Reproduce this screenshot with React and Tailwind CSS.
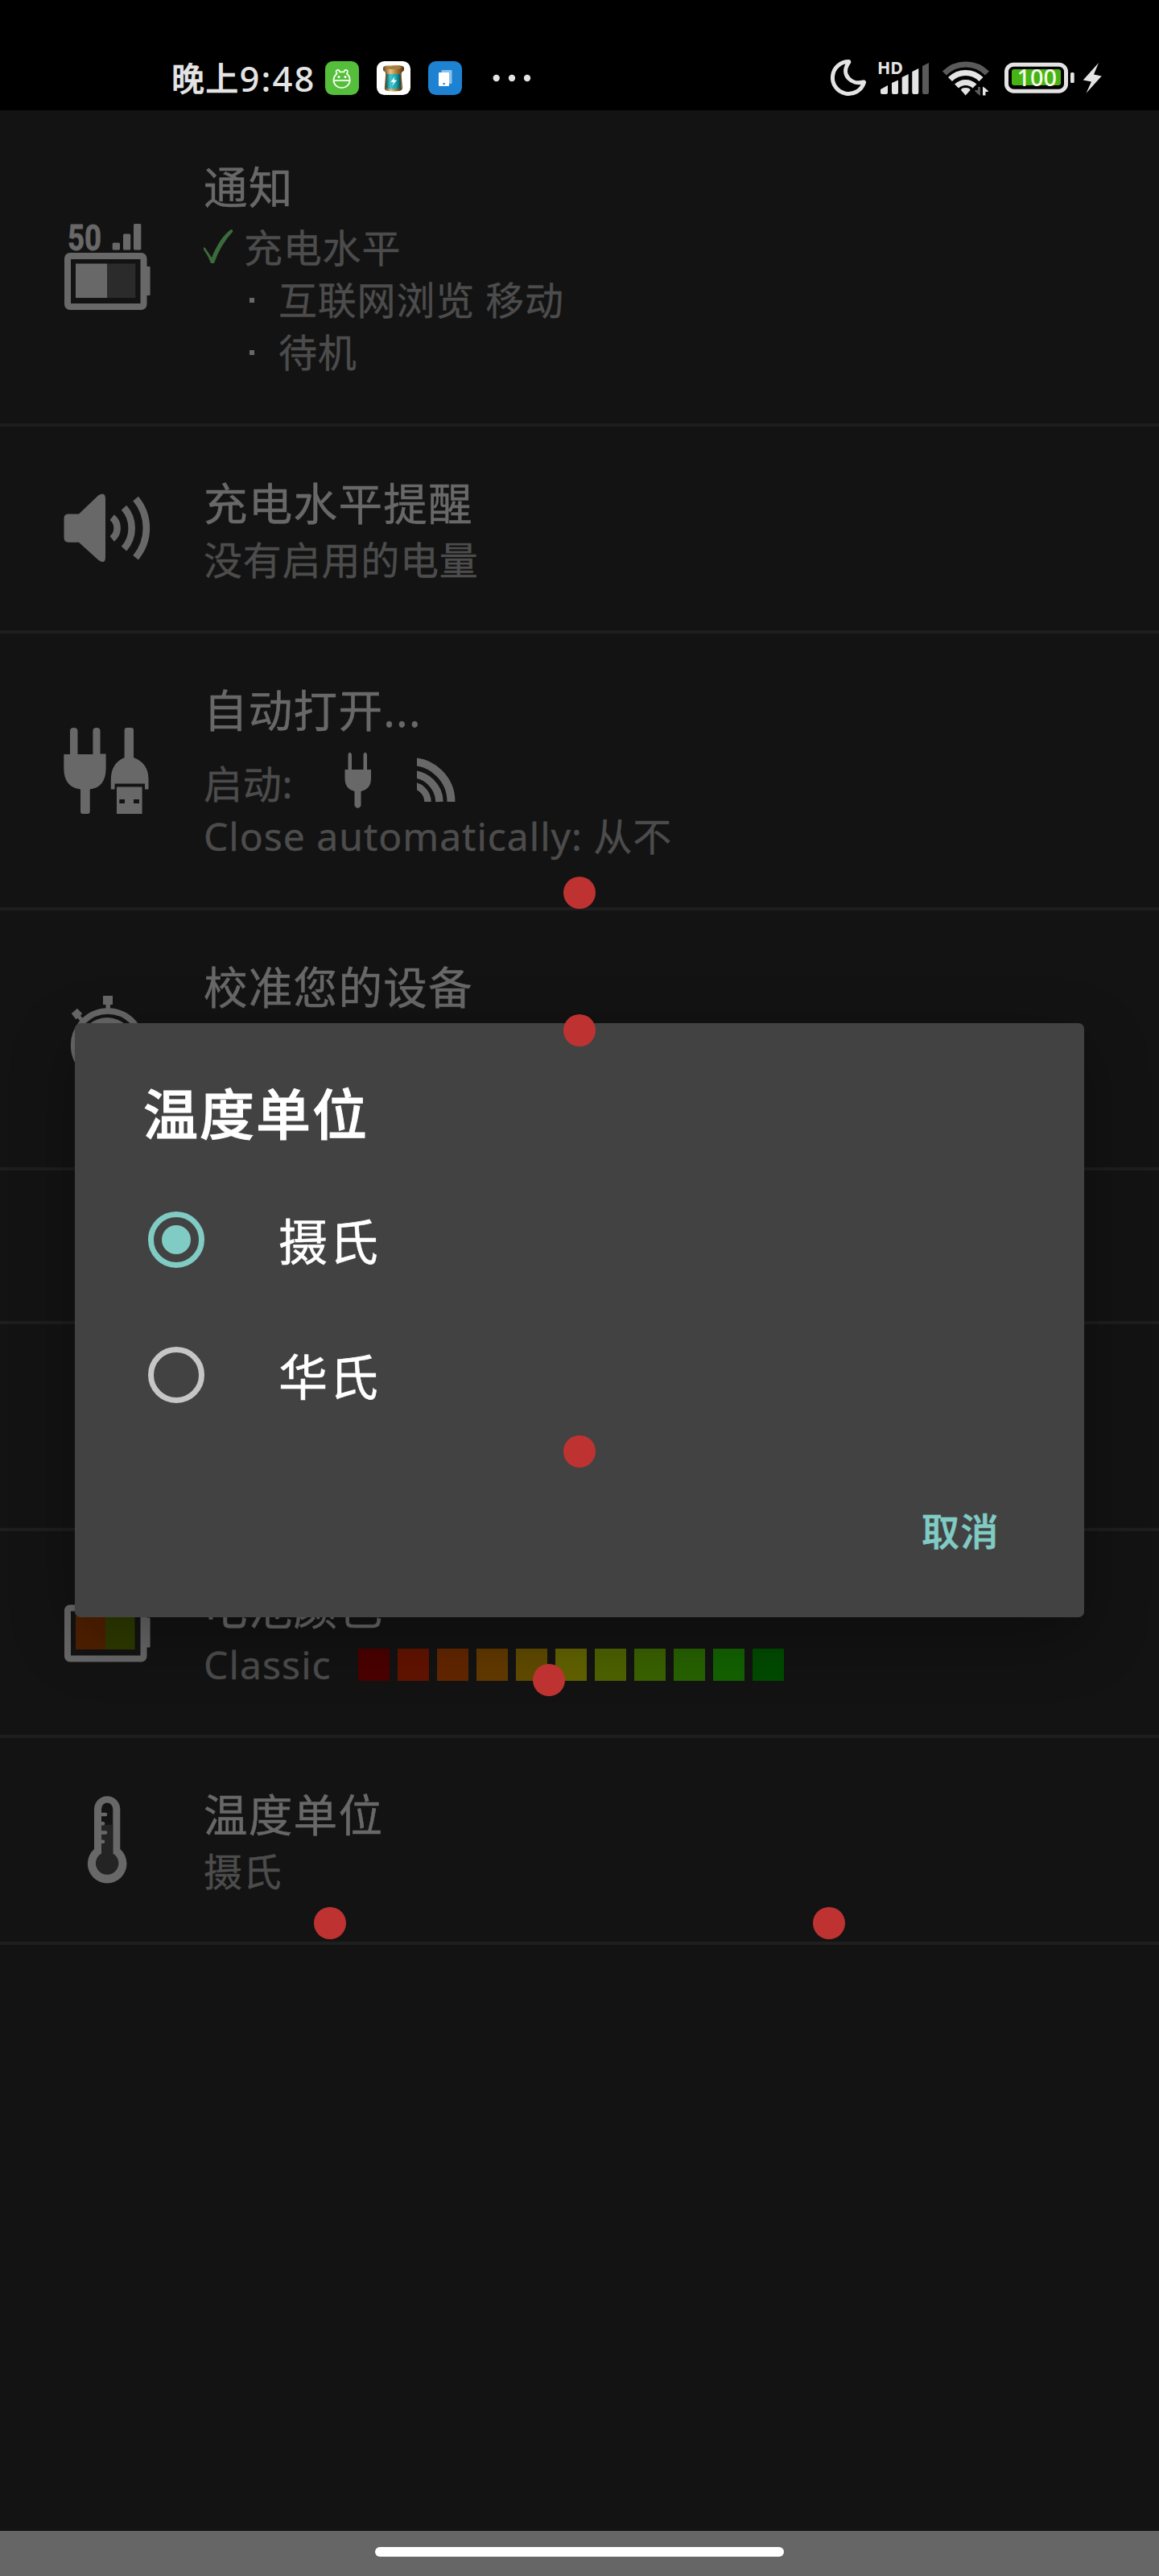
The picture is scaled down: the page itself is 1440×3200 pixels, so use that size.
const SWATCHES = [
  'bg-[#4b0000]',
  'bg-[#621300]',
  'bg-[#622600]',
  'bg-[#623900]',
  'bg-[#614b00]',
  'bg-[#626200]',
  'bg-[#4e6200]',
  'bg-[#3a6200]',
  'bg-[#276200]',
  'bg-[#136200]',
  'bg-[#004b00]',
];

function IconBox({ children }) {
  return (
    <svg width="107" height="107" viewBox="0 0 107 107" className="shrink-0 overflow-visible text-[#686868]" fill="currentColor">
      {children}
    </svg>
  );
}

function NotificationIcon() {
  return (
    <IconBox>
      <text x="4" y="32.5" fontSize="45" fontWeight="700" fontFamily="Roboto" stroke="currentColor" strokeWidth="0.8" textLength="42" lengthAdjust="spacingAndGlyphs">50</text>
      <rect x="59.7" y="23.5" width="9.3" height="9" rx="1.5" />
      <rect x="73" y="12.5" width="9.2" height="20" rx="1.5" />
      <rect x="86" y="0" width="9.3" height="32.5" rx="1.5" />
      <rect x="4" y="40" width="94.5" height="63" rx="3" fill="none" stroke="currentColor" strokeWidth="8" />
      <rect x="101" y="53" width="5.6" height="36" rx="1" />
      <rect x="14" y="49.5" width="39" height="42.5" />
      <rect x="53" y="49.5" width="35.3" height="42.5" fill="#2b2b2b" />
    </IconBox>
  );
}

function SpeakerIcon() {
  return (
    <IconBox>
      <path d="M5 35.5H18L42 12.5Q51 7 51 17V89Q51 99 42 92.5L18 70.7H5Q-.5 70.7 -.5 65V41Q-.5 35.5 5 35.5Z" />
      <g fill="none" stroke="currentColor" strokeWidth="8.6">
        <path d="M59.2 39.7A17 17 0 0 1 59.2 66.3" />
        <path d="M74 27.7A38.4 38.4 0 0 1 74 78.7" />
        <path d="M88.6 16.5A57.2 57.2 0 0 1 88.6 89.7" />
      </g>
    </IconBox>
  );
}

function PlugUsbIcon() {
  return (
    <IconBox>
      <path d="M7 33V4Q7 0 11.7 0T16.5 4V33H35.4V4Q35.4 0 40 0T44.5 4V32.5H51.6V50Q51.6 74 31.7 76.5V104Q31.7 107 29 107H23Q20 107 20 104V76.5Q-.7 74 -.7 50V33Z" />
      <path d="M74.6 37V3Q74.6 0 77.6 0H83Q86 0 86 3V37Q104.5 44 104.5 64V76.5H100V69.5H62.5V76.5H57.8V64Q58 44 74.6 37Z" />
      <path fillRule="evenodd" d="M65 73.5H96.6V107H65ZM68.3 89V94H75V89ZM86 89V94H93V89Z" />
    </IconBox>
  );
}

function StopwatchIcon() {
  return (
    <IconBox>
      <path d="M48 0H60V11H57V17H51.5V11H48Z" />
      <circle cx="54" cy="61.5" r="42.5" fill="none" stroke="currentColor" strokeWidth="7.3" />
      <circle cx="53" cy="61.5" r="34.5" />
      <path d="M8.8 22L16 15.7L22 22L20 25L25 30L21 34L17 28L14 29Z" />
    </IconBox>
  );
}

function BatteryColorsIcon() {
  return (
    <IconBox>
      <rect x="4" y="22.5" width="94.5" height="63" rx="3" fill="none" stroke="currentColor" strokeWidth="8" />
      <rect x="101" y="34.5" width="5.6" height="37" rx="1" />
      <rect x="14" y="32" width="37" height="42" fill="#502000" />
      <rect x="51" y="32" width="36.5" height="42" fill="#2e3b00" />
    </IconBox>
  );
}

function ThermometerIcon() {
  return (
    <IconBox>
      <path d="M37 65V15.5A16.15 16.15 0 0 1 69.3 15.5V65A24.3 24.3 0 1 1 37 65Z" />
      <path d="M46 70V15.5A7.15 8 0 0 1 60.3 15.5V70Z" fill="#131313" />
      <path d="M46 34.7H60.3V70.4A14.2 14.2 0 1 1 46 70.4Z" fill="#242424" />
      <g stroke="currentColor" strokeWidth="4.6" strokeLinecap="round">
        <path d="M44 22H51" />
        <path d="M44 33.3H48" />
        <path d="M44 44.5H51" />
        <path d="M44 55.7H48" />
      </g>
    </IconBox>
  );
}

function Row({ icon, title, height, children }) {
  return (
    <div className={`flex w-full shrink-0 items-center border-b-4 border-[#1e1e1e] pl-[80px] ${height}`}>
      {icon}
      <div className="flex h-full flex-1 flex-col pt-[58px] pl-[66px]">
        <div className="h-[75px] text-[54.5px] leading-[75px] tracking-[1.3px] text-[#686868] [-webkit-text-stroke:0.5px_currentColor]">
          {title}
        </div>
        {children}
      </div>
    </div>
  );
}

function Sub({ children }) {
  return (
    <div className="flex h-[65px] items-center text-[48px] leading-[65px] tracking-[0.8px] whitespace-pre text-[#4c4c4c] [-webkit-text-stroke:0.4px_currentColor]">
      {children}
    </div>
  );
}

function Bullet() {
  return <span className="mr-[30px] ml-[57px] size-[6px] bg-[#686868]" />;
}

function StatusBar() {
  return (
    <div className="flex h-[137px] w-full shrink-0 bg-black pt-[57px] text-[#e4e4e4]">
      <div className="ml-[213px] flex h-[80px] w-[191px] text-[43.5px] leading-[80px] font-medium whitespace-nowrap">
        <span className="text-[41px] tracking-[1.2px] [-webkit-text-stroke:0.6px_currentColor]">晚上</span>
        <span className="tracking-[2.2px]">9:48</span>
      </div>
      <svg width="260" height="80" viewBox="404 57 260 80">
        <defs>
          <linearGradient id="gold">
            <stop offset="0" stopColor="#6a4317" />
            <stop offset=".35" stopColor="#e3c285" />
            <stop offset=".65" stopColor="#a87835" />
            <stop offset="1" stopColor="#4d300f" />
          </linearGradient>
          <linearGradient id="teal">
            <stop offset="0" stopColor="#0c4a55" />
            <stop offset=".3" stopColor="#3fc9cc" />
            <stop offset=".7" stopColor="#16a0a8" />
            <stop offset="1" stopColor="#0a3d48" />
          </linearGradient>
        </defs>
        <rect x="404" y="76" width="42" height="42" rx="9.5" fill="#55bf3b" />
        <g fill="none" stroke="#f4fff0" strokeWidth="1.8">
          <path d="M418.500 91.500Q414.500 95 414.500 99.500A10 9.500 0 0 0 434.700 99.500Q434.700 95 431 91.500Q433 88 430.500 87Q428 86.500 427.500 89.300H422Q421.500 86.500 419 87Q416.500 88 418.500 91.500Z" />
          <path d="M414.500 100H434.700" />
        </g>
        <circle cx="421" cy="95.500" r="1.500" fill="#fff" />
        <circle cx="429" cy="95.500" r="1.500" fill="#fff" />
        <rect x="468" y="76" width="42" height="42" rx="9.500" fill="#fff" />
        <rect x="479" y="89" width="19.500" height="22" fill="url(#teal)" />
        <path d="M476 84Q476 81 489 81T502 84V87Q502 88 500 89L498 92H480L478 89Q476 88 476 87Z" fill="url(#gold)" />
        <ellipse cx="489" cy="84" rx="10" ry="2" fill="#a87d40" />
        <path d="M478 109Q489 112 499.500 109V111Q499 113.500 489 113.500T478 111Z" fill="url(#gold)" />
        <path d="M480 90L478.500 110M497.500 90L499.500 110" stroke="#7d5826" strokeWidth="1.500" />
        <path d="M490.500 95L485.500 102H489L487 107L493 99.500H489.500Z" fill="#fff" />
        <rect x="532" y="76" width="42" height="42" rx="9.500" fill="#1d82d2" />
        <rect x="548.500" y="87" width="13" height="17" rx="1" fill="#8dc2ec" />
        <rect x="545" y="90" width="13" height="17" rx="1" fill="#fff" />
        <rect x="550.500" y="103" width="2.200" height="2.200" fill="#1d82d2" />
        <g fill="currentColor">
          <circle cx="616.700" cy="97" r="4.200" />
          <circle cx="636" cy="97" r="4.200" />
          <circle cx="655" cy="97" r="4.200" />
        </g>
      </svg>
      <svg width="350" height="80" viewBox="1030 57 350 80" className="ml-[366px]" fill="currentColor">
        <path d="M1054.500 76.500A20 20 0 1 0 1073.500 102.500Q1074 101.500 1072.500 102C1058 106 1045 93 1053 80Q1055.500 77 1054.500 76.500Z" fill="none" stroke="currentColor" strokeWidth="5" strokeLinejoin="round" />
        <text x="1090" y="91.800" fontSize="21.500" fontWeight="700" fontFamily="Noto Sans" textLength="32" lengthAdjust="spacingAndGlyphs">HD</text>
        <path d="M1094 111L1103 106V115Q1103 117 1101 117H1096Q1094 117 1094 115Z" />
        <path d="M1108 103L1116 99.500V115Q1116 117 1114 117H1110Q1108 117 1108 115Z" />
        <path d="M1120.700 96L1128.700 92V115Q1128.700 117 1126.700 117H1122.700Q1120.700 117 1120.700 115Z" />
        <path d="M1133.300 89L1141.300 85V115Q1141.300 117 1139.300 117H1135.300Q1133.300 117 1133.300 115Z" />
        <path d="M1146 82L1154 78V115Q1154 117 1152 117H1148Q1146 117 1146 115Z" fill="#5a5a5a" />
        <g fill="none" strokeWidth="7">
          <path d="M1173.300 91A37.400 37.400 0 0 1 1226.500 91" stroke="#5a5a5a" />
          <path d="M1180.500 98.500A27 27 0 0 1 1219 98.500" stroke="currentColor" />
          <path d="M1188.500 107A16 16 0 0 1 1211 107" stroke="currentColor" />
        </g>
        <path d="M1194 112Q1194 109 1199.700 109T1205.500 112L1199.700 118.500Z" />
        <path d="M1215 108H1218V119Q1211 114 1211 112H1215Z" fill="#5a5a5a" />
        <path d="M1221 107.500Q1228 112 1228 114H1224.500V118.500H1221Z" />
        <rect x="1250.500" y="80.200" width="74" height="33" rx="9" fill="none" stroke="currentColor" strokeWidth="5" />
        <rect x="1257" y="86" width="61" height="20" rx="3" fill="#48b314" />
        <rect x="1330" y="90" width="4.700" height="13" rx="1.500" />
        <text x="1263.500" y="106.700" fontSize="28.500" fontWeight="500" fontFamily="Noto Sans" textLength="49.500" lengthAdjust="spacingAndGlyphs" fill="#f4fbe9">100</text>
        <path d="M1365 78L1345.700 99.500L1356 101.500L1349.500 115.700L1368.700 94.500L1359 92.500Z" />
      </svg>
    </div>
  );
}

function Radio({ selected, label }) {
  return (
    <div className="flex h-[168px] items-center pl-[91px]">
      <span
        className={`flex size-[70px] items-center justify-center rounded-full border-[7px] ${
          selected ? 'border-[#80cbc4]' : 'border-[#c6c6c6]'
        }`}
      >
        {selected && <span className="size-[36px] rounded-full bg-[#80cbc4]" />}
      </span>
      <span className="mt-[5px] ml-[92px] text-[61px] leading-[80px] tracking-[2px] text-white [-webkit-text-stroke:0.6px_currentColor]">
        {label}
      </span>
    </div>
  );
}

function Dialog() {
  return (
    <div className="absolute top-[1271px] left-[93px] flex h-[738px] w-[1254px] flex-col rounded-[7px] bg-[#424242] shadow-[0_24px_80px_rgba(0,0,0,0.3)]">
      <div className="mt-[63px] h-[100px] pl-[85px] text-[68px] leading-[100px] font-medium tracking-[2px] text-white [-webkit-text-stroke:1px_currentColor]">
        温度单位
      </div>
      <div className="mt-[22px] flex flex-col">
        <Radio selected label="摄氏" />
        <Radio label="华氏" />
      </div>
      <div className="mt-[75px] mr-[105px] self-end text-[47px] leading-[70px] font-medium tracking-[1.5px] text-[#80cbc4] [-webkit-text-stroke:0.7px_currentColor]">
        取消
      </div>
    </div>
  );
}

function Marker({ place }) {
  return <span className={`absolute size-[40px] rounded-full bg-[#be3331] ${place}`} />;
}

export default function App() {
  return (
    <div className="relative flex h-[3200px] w-[1440px] flex-col overflow-hidden bg-[#131313] font-['Noto_Sans','Noto_Sans_CJK_SC',sans-serif]">
      <StatusBar />
      <Row icon={<NotificationIcon />} title="通知" height="h-[393px]">
        <div className="mt-[5px] flex flex-col">
          <Sub>
            <svg width="38" height="44" viewBox="0 0 38 44" className="mr-[12px] mb-[4px]" fill="#3b6a3c">
              <path d="M-1 25Q0 22 2 24L10 36Q20 11 34 1Q37 1 36 4Q21 20 13 43H9Q5 32 -1 25Z" />
            </svg>
            充电水平
          </Sub>
          <Sub><Bullet />互联网浏览 移动</Sub>
          <Sub><Bullet />待机</Sub>
        </div>
      </Row>
      <Row icon={<SpeakerIcon />} title="充电水平提醒" height="h-[257px]">
        <Sub>没有启用的电量</Sub>
      </Row>
      <Row icon={<PlugUsbIcon />} title="自动打开..." height="h-[344px]">
        <div className="mt-[21px] flex flex-col">
          <Sub>
            <span className="w-[175px]">启动:</span>
            <svg width="34" height="70" viewBox="0 0 34 70" className="mb-[9px]" fill="#686868">
              <path d="M4.500 22V3Q6.500 -2 9 3V22H23.500V3Q25.500 -2 28 3V22H33V33Q33 46 20.500 49V67Q16.500 73 12.500 67V49Q.5 46 .5 33V22Z" />
            </svg>
            <svg width="48" height="56" viewBox="0 0 48 56" className="mb-[9px] ml-[56px]" fill="none" stroke="#686868">
              <path d="M-8 5A50 50 0 0 1 42.500 55" strokeWidth="10" />
              <path d="M-8 20.500A35.500 35.500 0 0 1 28 55" strokeWidth="9.500" />
              <path d="M-8 34.500A21 21 0 0 1 13.500 55" strokeWidth="8.500" />
            </svg>
          </Sub>
          <Sub><span className="tracking-[1px]">Close automatically: 从不</span></Sub>
        </div>
      </Row>
      <Row icon={<StopwatchIcon />} title="校准您的设备" height="h-[323px]" />
      <div className="h-[191px] w-full shrink-0 border-b-4 border-[#1e1e1e]" />
      <div className="h-[257px] w-full shrink-0 border-b-4 border-[#1e1e1e]" />
      <Row icon={<BatteryColorsIcon />} title="电池颜色" height="h-[257px]">
        <Sub>
          <span className="w-[192px] tracking-[1.1px]">Classic</span>
          <span className="flex gap-[10px]">
            {SWATCHES.map((c) => (
              <span key={c} className={`h-[40px] w-[39px] ${c}`} />
            ))}
          </span>
        </Sub>
      </Row>
      <Row icon={<ThermometerIcon />} title="温度单位" height="h-[257px]">
        <Sub>摄氏</Sub>
      </Row>
      <div className="flex-1" />
      <div className="flex h-[56px] w-full shrink-0 justify-center bg-[#666666] pt-[20px]">
        <div className="h-[12px] w-[508px] rounded-full bg-white" />
      </div>
      <Dialog />
      <Marker place="top-[1089px] left-[700px]" />
      <Marker place="top-[1260px] left-[700px]" />
      <Marker place="top-[1783px] left-[700px]" />
      <Marker place="top-[2067px] left-[662px]" />
      <Marker place="top-[2369px] left-[390px]" />
      <Marker place="top-[2369px] left-[1010px]" />
    </div>
  );
}
